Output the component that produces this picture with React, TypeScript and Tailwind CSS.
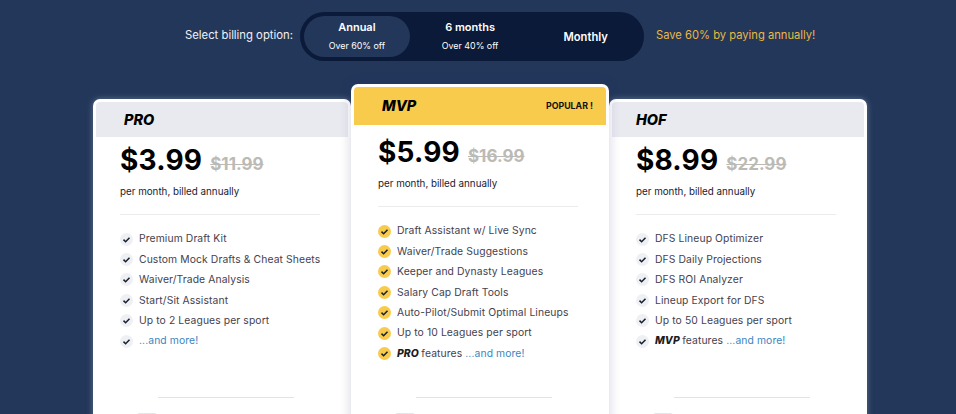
const font = { fontFamily: '"Inter", "Noto Sans", sans-serif' };

type Plan = {
  name: string;
  price: string;
  oldPrice: string;
  features: { label?: string; text?: string; more?: boolean }[];
  popular?: boolean;
};

const plans: Plan[] = [
  {
    name: 'PRO',
    price: '$3.99',
    oldPrice: '$11.99',
    features: [
      { text: 'Premium Draft Kit' },
      { text: 'Custom Mock Drafts & Cheat Sheets' },
      { text: 'Waiver/Trade Analysis' },
      { text: 'Start/Sit Assistant' },
      { text: 'Up to 2 Leagues per sport' },
      { more: true },
    ],
  },
  {
    name: 'MVP',
    price: '$5.99',
    oldPrice: '$16.99',
    popular: true,
    features: [
      { text: 'Draft Assistant w/ Live Sync' },
      { text: 'Waiver/Trade Suggestions' },
      { text: 'Keeper and Dynasty Leagues' },
      { text: 'Salary Cap Draft Tools' },
      { text: 'Auto-Pilot/Submit Optimal Lineups' },
      { text: 'Up to 10 Leagues per sport' },
      { label: 'PRO', text: 'features', more: true },
    ],
  },
  {
    name: 'HOF',
    price: '$8.99',
    oldPrice: '$22.99',
    features: [
      { text: 'DFS Lineup Optimizer' },
      { text: 'DFS Daily Projections' },
      { text: 'DFS ROI Analyzer' },
      { text: 'Lineup Export for DFS' },
      { text: 'Up to 50 Leagues per sport' },
      { label: 'MVP', text: 'features', more: true },
    ],
  },
];

const CheckDot = ({ gold }: { gold?: boolean }) => (
  <span
    className={`flex h-[13px] w-[13px] shrink-0 items-center justify-center rounded-full ${gold ? 'bg-[#f9cb4c]' : 'bg-[#eff0f4]'}`}
  >
    <svg viewBox="0 0 12 12" className="h-[9px] w-[9px]" fill="none">
      <path d="M2 6.2 4.8 9 10 3.6" stroke="#16202f" strokeWidth="2" />
    </svg>
  </span>
);

const PlanCard = ({ plan }: { plan: Plan }) => {
  const gold = plan.popular;
  return (
    <div
      className={`relative w-[258px] shrink-0 rounded-[7px] border-[3.5px] border-white bg-white ${gold ? 'z-10 -mt-[15px] h-[345px] shadow-[0_0_12px_rgba(50,50,120,0.22)]' : 'h-[330px] shadow-[0_0_6px_rgba(255,255,255,0.3)]'}`}
    >
      <div
        className={`flex items-center justify-between rounded-t-[4px] ${gold ? 'h-[38px] bg-[#f9cb4c] pr-[13px]' : 'h-[35px] bg-[#e9eaf0]'} ${plan.name === 'HOF' ? 'pl-[24px]' : 'pl-[28px]'}`}
      >
        <span className="text-[14.5px] font-extrabold italic text-black">{plan.name}</span>
        {gold && <span className="text-[8.8px] font-bold text-[#111]">POPULAR !</span>}
      </div>
      <div className="px-[24px]">
        <div className={`flex items-baseline gap-[8px] ${gold ? 'mt-[6px]' : 'mt-[2px]'}`}>
          <span className="text-[28px] font-bold leading-[42px] tracking-[0.2px] text-black">{plan.price}</span>
          <span className="text-[17px] font-bold text-[#bcbab5] line-through">{plan.oldPrice}</span>
        </div>
        <p className="mt-[4px] text-[9.8px] leading-[14px] text-[#1a1a2e]">per month, billed annually</p>
        <div className="mt-[15px] h-px w-[200px] bg-[#ececee]" />
        <ul className="mt-[17px] flex flex-col gap-[6.45px]">
          {plan.features.map((feature, i) => (
            <li key={i} className="flex h-[14px] items-center gap-[6px] text-[10.35px] tracking-[0.1px] text-[#444250]">
              <CheckDot gold={gold} />
              <span className="whitespace-nowrap">
                {feature.label && <b className="font-extrabold italic text-[#1c1c1c]">{feature.label} </b>}
                {feature.text}
                {feature.more && <span className="text-[#3b86bf]">{feature.text ? ' ' : ''}...and more!</span>}
              </span>
            </li>
          ))}
        </ul>
      </div>
      <div className="absolute bottom-[28px] left-[62px] h-px w-[136px] bg-[#e2e2e8]" />
      <div className="absolute bottom-[9px] left-[41px] h-[4px] w-[20px] rounded-t-[3px] bg-[#e5e5e9]" />
    </div>
  );
};

export default function App() {
  return (
    <div className="h-[414px] w-[956px] overflow-hidden bg-[#22375a]" style={font}>
      <div className="flex items-center pl-[185px] pt-[12px]">
        <span className="w-[115px] pb-[2px] text-[11.3px] text-[#f0f1f5]">Select billing option:</span>
        <div className="flex h-[49px] w-[344px] items-center rounded-[25px] bg-[#0a1a38] pl-[4px] text-center text-white">
          <div className="flex h-[41px] w-[107px] flex-col items-center justify-center rounded-[21px] bg-[#22375a] pb-[2px]">
            <span className="text-[11px] font-semibold leading-[15px]">Annual</span>
            <span className="mt-[4px] text-[8.9px] leading-[13px]">Over 60% off</span>
          </div>
          <div className="ml-[2px] flex w-[118px] flex-col items-center pb-[2px]">
            <span className="text-[11px] font-semibold leading-[15px]">6 months</span>
            <span className="mt-[4px] text-[8.9px] leading-[13px]">Over 40% off</span>
          </div>
          <div className="ml-[-1px] w-[118px] pt-[1px] text-[11.2px] font-semibold">Monthly</div>
        </div>
        <span className="ml-[12px] pb-[2px] text-[11.2px] text-[#eab844]">Save 60% by paying annually!</span>
      </div>
      <div className="mt-[38px] flex justify-center pl-[4px]">
        {plans.map((plan) => (
          <PlanCard key={plan.name} plan={plan} />
        ))}
      </div>
    </div>
  );
}
